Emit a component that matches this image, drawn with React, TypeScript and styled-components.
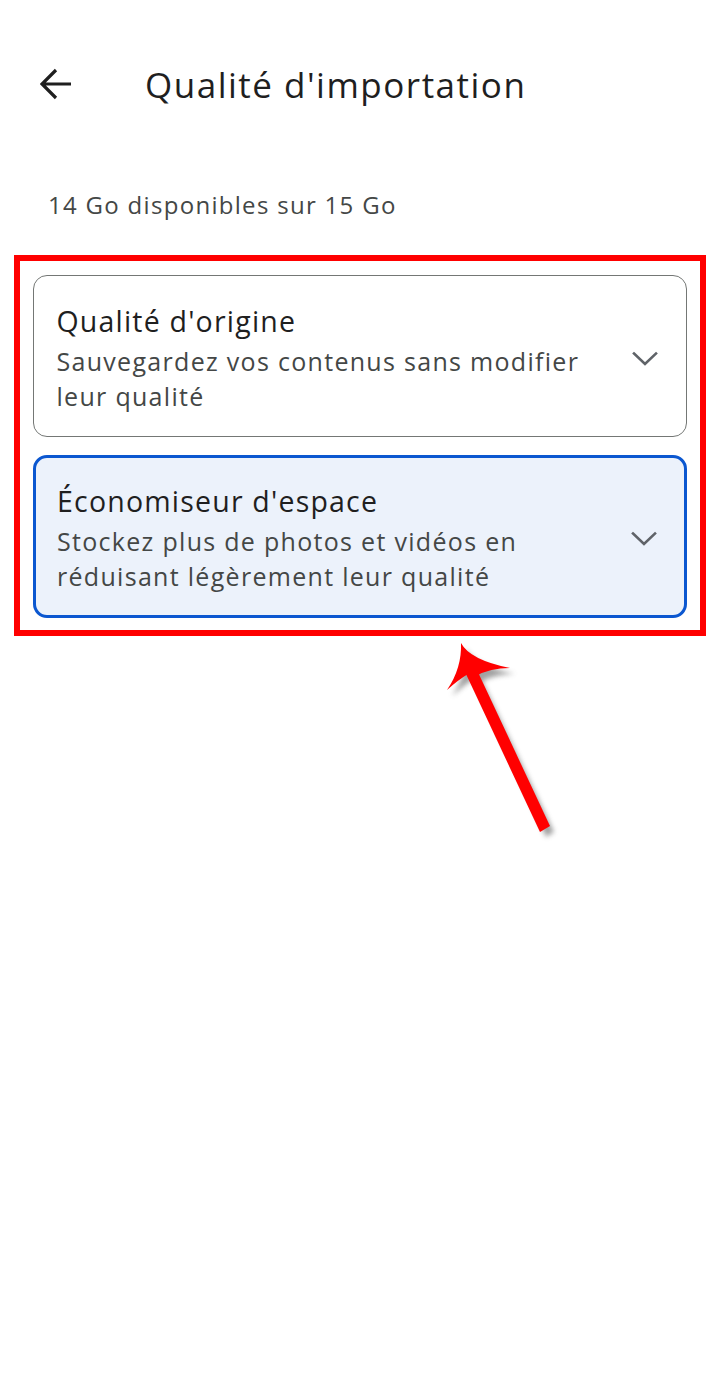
import styled, { createGlobalStyle } from "styled-components";

// GLOBAL
const GlobalStyle = createGlobalStyle`
  body {
    margin: 0;
    background: #ffffff;
    font-family: "Open Sans", Roboto, "Liberation Sans", sans-serif;
    color: #1f1f1f;
  }
`;

// STYLED
const Page = styled.div`
  position: relative;
  width: 720px;
  min-height: 1380px;
  background: #ffffff;
`;
const Header = styled.header`
  display: flex;
  align-items: center;
  height: 68px;
  padding: 50px 0 0 40px;
`;
const BackButton = styled.button`
  display: flex;
  align-items: center;
  justify-content: center;
  width: 32px;
  height: 32px;
  padding: 0;
  border: none;
  background: none;
  color: #1f1f1f;
`;
const Title = styled.h1`
  margin: 0 0 0 73px;
  font-size: 35px;
  font-weight: 400;
  letter-spacing: 1.5px;
  color: #1f1f1f;
`;
const Storage = styled.p`
  margin: 0;
  padding: 69px 0 0 48px;
  font-size: 24px;
  line-height: 36px;
  letter-spacing: 1.3px;
  color: #444746;
`;
const Highlight = styled.section`
  display: flex;
  flex-direction: column;
  gap: 18px;
  margin: 32px 14px 0;
  padding: 14px 13px 12px;
  border: 6px solid #ff0000;
`;
const Card = styled.div<{ $selected?: boolean }>`
  display: flex;
  align-items: center;
  gap: 16px;
  border-radius: 14px;
  border: ${(p) => (p.$selected ? "3px solid #0b57d0" : "1.5px solid #747775")};
  background: ${(p) => (p.$selected ? "#ecf2fb" : "#ffffff")};
  padding: ${(p) => (p.$selected ? "25px 26px 21px 21px" : "27px 27px 22px 22.5px")};
`;
const CardText = styled.div`
  flex: 1;
  display: flex;
  flex-direction: column;
  gap: 5px;
`;
const CardTitle = styled.div`
  font-size: 28.5px;
  line-height: 36px;
  letter-spacing: 1.2px;
  color: #1f1f1f;
`;
const CardDesc = styled.div`
  font-size: 25px;
  line-height: 35px;
  letter-spacing: 1.3px;
  color: #444746;
`;
const Chevron = styled.svg`
  flex: none;
  width: 28px;
  height: 28px;
  color: #5f6368;
`;
const Annotation = styled.svg`
  position: absolute;
  left: 420px;
  top: 620px;
  width: 160px;
  height: 240px;
  overflow: visible;
`;

const ExpandIcon = () => (
  <Chevron viewBox="0 0 28 28" fill="none">
    <path d="M3 8.5 L14 19 L25 8.5" stroke="currentColor" strokeWidth="2.6" strokeLinecap="square" />
  </Chevron>
);

const options = [
  {
    title: "Qualité d'origine",
    lines: ["Sauvegardez vos contenus sans modifier", "leur qualité"],
    selected: false,
  },
  {
    title: "Économiseur d'espace",
    lines: ["Stockez plus de photos et vidéos en", "réduisant légèrement leur qualité"],
    selected: true,
  },
];

export default function App() {
  return (
    <>
      <GlobalStyle />
      <Page>
        <Header>
          <BackButton aria-label="Retour">
            <svg width="32" height="32" viewBox="0 0 32 32" fill="none">
              <path d="M31 16 H3 M16 2 L2 16 L16 30" stroke="currentColor" strokeWidth="3.2" strokeLinejoin="miter" />
            </svg>
          </BackButton>
          <Title>Qualité d'importation</Title>
        </Header>
        <Storage>14 Go disponibles sur 15 Go</Storage>
        <Highlight>
          {options.map((o) => (
            <Card key={o.title} $selected={o.selected}>
              <CardText>
                <CardTitle>{o.title}</CardTitle>
                <CardDesc>
                  {o.lines.map((l) => (
                    <div key={l}>{l}</div>
                  ))}
                </CardDesc>
              </CardText>
              <ExpandIcon />
            </Card>
          ))}
        </Highlight>
        <Annotation viewBox="420 620 160 240">
          <defs>
            <filter id="shadow" x="-50%" y="-50%" width="200%" height="200%">
              <feGaussianBlur stdDeviation="2.5" />
            </filter>
          </defs>
          <g transform="translate(5 6)" fill="#555" opacity="0.55" filter="url(#shadow)">
            <path d="M469 672 L474 668 L549 826 L541 831 Z" />
            <path d="M461 643 Q470 660 510 668 Q490 668 476 676 L470 672 Q458 680 447 690 Q462 668 461 643 Z" />
          </g>
          <g fill="#ff0000">
            <path d="M466 674 L476 668 L550 826 L540 832 Z" />
            <path d="M461 643 Q470 660 510 668 Q490 668 476 676 L468 674 Q458 680 447 690 Q462 668 461 643 Z" />
          </g>
        </Annotation>
      </Page>
    </>
  );
}
